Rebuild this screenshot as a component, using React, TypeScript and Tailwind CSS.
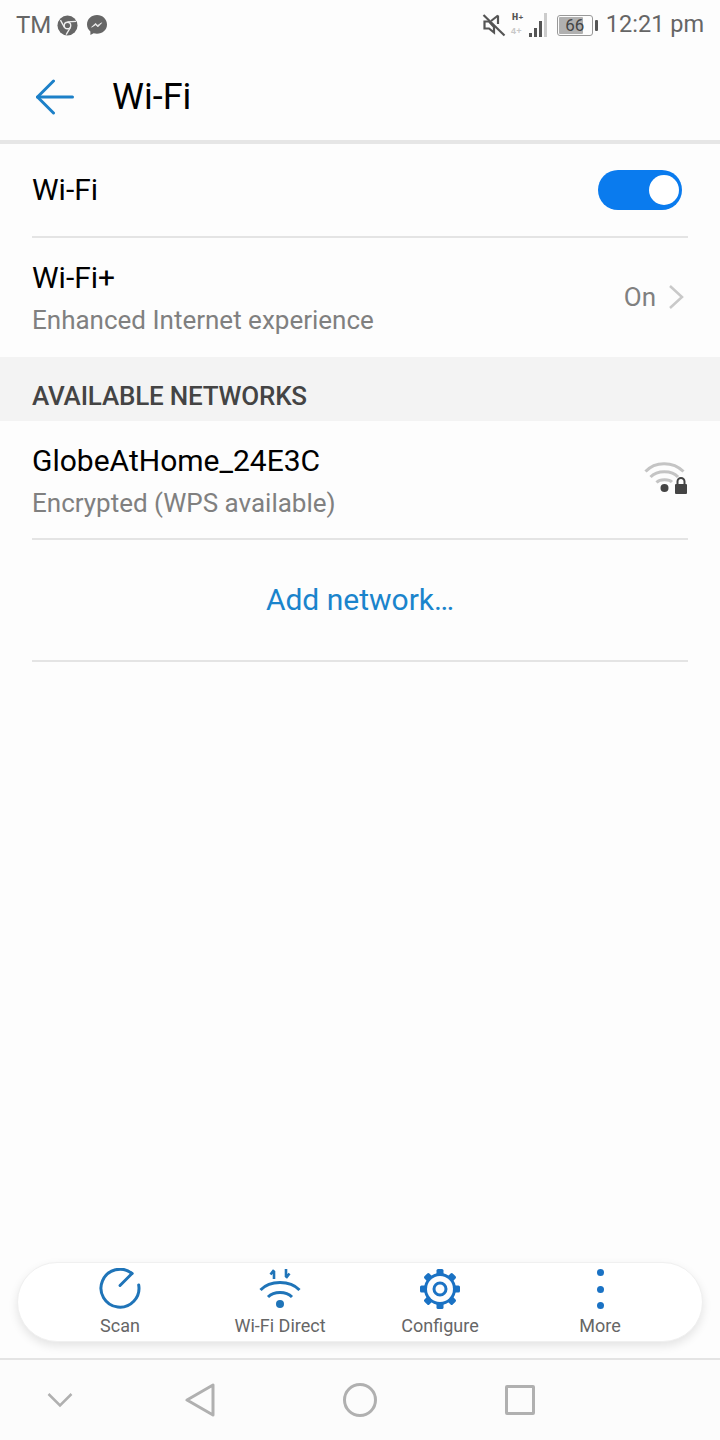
const ChromeIcon = () => (
  <svg width="21" height="21" viewBox="0 0 22 22">
    <circle cx="11" cy="11" r="10.500" fill="#666" />
    <circle cx="11" cy="11" r="3.400" fill="#666" stroke="#eee" strokeWidth="1.400" />
    <path d="M11 7.200 L20 6.600 M7.800 13 L3.600 5.400 M13.800 13.400 L9.600 20.600" stroke="#eee" strokeWidth="1.400" fill="none" />
  </svg>
);

const MessengerIcon = () => (
  <svg width="22" height="22" viewBox="0 0 22 22">
    <path d="M11 1C5.400 1 1 5.100 1 10.400c0 2.900 1.300 5.300 3.400 7V21l3.200-1.800c1.100.3 2.200.5 3.400.5 5.600 0 10-4.100 10-9.300S16.600 1 11 1z" fill="#666" />
    <path d="M5.600 13.200 9.400 9.400l2.400 2 3.800-2.600-3.600 4-2.500-2z" fill="#eee" stroke="#eee" strokeWidth="0.800" />
  </svg>
);

const MuteIcon = () => (
  <svg width="24" height="24" viewBox="0 0 24 24" fill="none" stroke="#555" strokeWidth="2.200">
    <path d="M2.500 8.500h4.500l5 5.500v5.500L7 15.500H2.500z" />
    <path d="M16 2.500v8.500" />
    <path d="M9 8 16 2.500" />
    <path d="M1.500 2 22.500 22.500" />
  </svg>
);

const SignalIcon = () => (
  <div className="relative w-[36px] h-[24px]">
    <span className="absolute left-[1px] top-[-1px] text-[11px] leading-[11px] font-bold text-[#555] font-['Liberation_Mono',monospace]">
      H<span className="text-[8px] align-top">+</span>
    </span>
    <span className="absolute left-0 bottom-0 text-[9px] leading-[10px] font-bold text-[#c8c8c8] font-['Liberation_Mono',monospace]">4+</span>
    <div className="absolute right-0 bottom-0 flex items-end gap-[2px]">
      <span className="w-[3px] h-[4px] bg-[#555]" />
      <span className="w-[3px] h-[9px] bg-[#555]" />
      <span className="w-[3px] h-[16px] bg-[#555]" />
      <span className="w-[3px] h-[24px] bg-[#ccc]" />
    </div>
  </div>
);

const Battery = () => (
  <div className="flex items-center gap-[2px]">
    <div className="relative w-[36px] h-[21px] rounded-[3px] border border-[#999] p-[1px]">
      <div className="h-full w-[76%] bg-[#b0b0b0] rounded-[1px]" />
      <span className="absolute inset-0 flex items-center justify-center text-[17px] leading-none text-[#444]">66</span>
    </div>
    <span className="w-[3px] h-[11px] bg-[#555] rounded-[1px]" />
  </div>
);

const StatusBar = () => (
  <div className="h-[50px] pl-[16px] pr-[16px] flex items-center justify-between">
    <div className="flex items-center gap-[8px]">
      <span className="text-[24px] leading-none text-[#666] mr-[-2px]">TM</span>
      <ChromeIcon />
      <MessengerIcon />
    </div>
    <div className="flex items-center">
      <div className="mr-[5px]"><MuteIcon /></div>
      <div className="mr-[10px]"><SignalIcon /></div>
      <div className="mr-[8px]"><Battery /></div>
      <span className="text-[23.5px] leading-none text-[#666]">12:21 pm</span>
    </div>
  </div>
);

const Header = () => (
  <div className="h-[94px] pt-[4px] flex items-center border-b-4 border-[#e6e6e6]">
    <svg className="ml-[36px]" width="38" height="36" viewBox="0 0 38 36" fill="none" stroke="#1c80c8" strokeWidth="3" strokeLinecap="round" strokeLinejoin="round">
      <path d="M1.500 18h35" />
      <path d="M17.500 2 1.500 18 17.500 34" />
    </svg>
    <h1 className="ml-[38px] text-[36px] leading-none font-normal text-black">Wi-Fi</h1>
  </div>
);

const Toggle = () => (
  <div className="w-[84px] h-[40px] rounded-full bg-[#0a7bee] flex items-center justify-end pr-[3px]">
    <div className="w-[30px] h-[30px] rounded-full bg-white" />
  </div>
);

const WifiLockIcon = () => (
  <svg className="mb-[3px]" width="44" height="34" viewBox="0 0 44 34" fill="none">
    <path d="M1.500 10.500C11 0 29 0 39.500 10.500" stroke="#c4c4c4" strokeWidth="3" />
    <path d="M6.500 16C13 9 28 9 34 16" stroke="#c4c4c4" strokeWidth="3" />
    <path d="M12.500 21.500C16 18 25 18 28 21" stroke="#c4c4c4" strokeWidth="3" />
    <circle cx="20.500" cy="27" r="4" fill="#444" />
    <rect x="31" y="23" width="12" height="10" rx="1" fill="#444" />
    <path d="M33.500 23v-2.500a3.500 3.500 0 0 1 7 0V23" stroke="#444" strokeWidth="2" />
  </svg>
);

const ScanIcon = () => (
  <svg width="42" height="42" viewBox="0 0 42 42" fill="none" stroke="#1f74b8" strokeWidth="3" strokeLinecap="round" strokeLinejoin="round">
    <path d="M33 5.500A19 19 0 1 0 39.700 17" />
    <path d="M33 5.500 21 17.500" />
  </svg>
);

const DirectIcon = () => (
  <svg width="42" height="42" viewBox="0 0 42 42" fill="none" stroke="#1f74b8">
    <path d="M15 11V3M15 2 11.500 6.500M27 1v8M27 10l3.500-4.500" strokeWidth="2.600" />
    <path d="M1.500 22C11 12 31 12 40.500 22" strokeWidth="3" />
    <path d="M9 29C15 23 27 23 33 29" strokeWidth="3" />
    <circle cx="21" cy="36" r="4" fill="#1f74b8" stroke="none" />
  </svg>
);

const GearIcon = () => (
  <svg width="42" height="42" viewBox="0 0 42 42" fill="none">
    <g fill="#1a72c4">
      <rect x="17.500" y="1" width="7" height="40" rx="1.500" />
      <rect x="1" y="17.500" width="40" height="7" rx="1.500" />
      <rect x="17.500" y="1" width="7" height="40" rx="1.500" transform="rotate(45 21 21)" />
      <rect x="17.500" y="1" width="7" height="40" rx="1.500" transform="rotate(-45 21 21)" />
    </g>
    <circle cx="21" cy="21" r="16" fill="#1a72c4" />
    <circle cx="21" cy="21" r="13" fill="#fdfdfd" />
    <circle cx="21" cy="21" r="6" stroke="#1a72c4" strokeWidth="3" />
  </svg>
);

const MoreIcon = () => (
  <div className="h-[42px] flex flex-col items-center justify-between py-[1px]">
    <span className="w-[7px] h-[7px] rounded-full bg-[#1a72c4]" />
    <span className="w-[7px] h-[7px] rounded-full bg-[#1a72c4]" />
    <span className="w-[7px] h-[7px] rounded-full bg-[#1a72c4]" />
  </div>
);

const actions = [
  { label: "Scan", icon: <ScanIcon /> },
  { label: "Wi-Fi Direct", icon: <DirectIcon /> },
  { label: "Configure", icon: <GearIcon /> },
  { label: "More", icon: <MoreIcon /> },
];

export default function App() {
  return (
    <div className="w-[720px] h-[1440px] flex flex-col bg-[#fdfdfd] font-['Roboto',sans-serif] overflow-hidden">
      <StatusBar />
      <Header />

      <div className="mx-[32px] h-[94px] flex items-center justify-between border-b-2 border-[#e4e4e4]">
        <span className="text-[30px] leading-none text-black">Wi-Fi</span>
        <div className="mr-[6px]"><Toggle /></div>
      </div>

      <div className="h-[119px] pl-[32px] pr-[36px] flex items-center justify-between">
        <div>
          <div className="text-[30px] leading-[36px] text-black">Wi-Fi+</div>
          <div className="mt-[9px] text-[26px] leading-[30px] text-[#808080]">Enhanced Internet experience</div>
        </div>
        <div className="flex items-center gap-[12px] mb-[2px]">
          <span className="text-[26px] leading-none text-[#808080]">On</span>
          <svg width="16" height="26" viewBox="0 0 16 26" fill="none" stroke="#c9c9c9" strokeWidth="2.500">
            <path d="M2 2l12 11L2 24" />
          </svg>
        </div>
      </div>

      <div className="h-[64px] px-[32px] pt-[14px] flex items-center bg-[#f3f3f3]">
        <span className="text-[26px] leading-none font-medium tracking-[-0.2px] text-[#444]">AVAILABLE NETWORKS</span>
      </div>

      <div className="mx-[32px] h-[119px] flex items-center justify-between border-b-2 border-[#e4e4e4]">
        <div className="mt-[2px]">
          <div className="text-[30px] leading-[36px] text-black">GlobeAtHome_24E3C</div>
          <div className="mt-[9px] text-[26px] leading-[30px] text-[#808080]">Encrypted (WPS available)</div>
        </div>
        <WifiLockIcon />
      </div>

      <div className="mx-[32px] h-[122px] flex items-center justify-center border-b-2 border-[#e4e4e4]">
        <span className="text-[30px] leading-none text-[#1a84cc]">Add network…</span>
      </div>

      <div className="flex-1" />

      <div className="mx-[17px] h-[80px] rounded-[40px] bg-white border border-[#f0f0f0] shadow-[0_4px_10px_rgba(0,0,0,0.1)] grid grid-cols-4 mb-[16px] px-[22px]">
        {actions.map((a) => (
          <div key={a.label} className="flex flex-col items-center pt-[5px]">
            <div className="h-[42px] flex items-center justify-center">{a.icon}</div>
            <span className="mt-[5px] text-[18px] leading-[22px] text-[#666]">{a.label}</span>
          </div>
        ))}
      </div>

      <div className="h-[82px] border-t-2 border-[#e4e4e4] bg-[#fcfcfc] grid grid-cols-[120px_160px_160px_160px]">
        <div className="flex items-center justify-center">
          <svg width="26" height="16" viewBox="0 0 26 16" fill="none" stroke="#b0b0b0" strokeWidth="2.500"><path d="M1.500 2 13 13.500 24.500 2" /></svg>
        </div>
        <div className="flex items-center justify-center">
          <svg width="30" height="34" viewBox="0 0 30 34" fill="none" stroke="#b0b0b0" strokeWidth="3" strokeLinejoin="round"><path d="M28 2v30L2 17z" /></svg>
        </div>
        <div className="flex items-center justify-center">
          <div className="w-[34px] h-[34px] rounded-full border-[3px] border-[#b0b0b0]" />
        </div>
        <div className="flex items-center justify-center">
          <div className="w-[30px] h-[30px] rounded-[2px] border-[3px] border-[#b0b0b0]" />
        </div>
      </div>
    </div>
  );
}
